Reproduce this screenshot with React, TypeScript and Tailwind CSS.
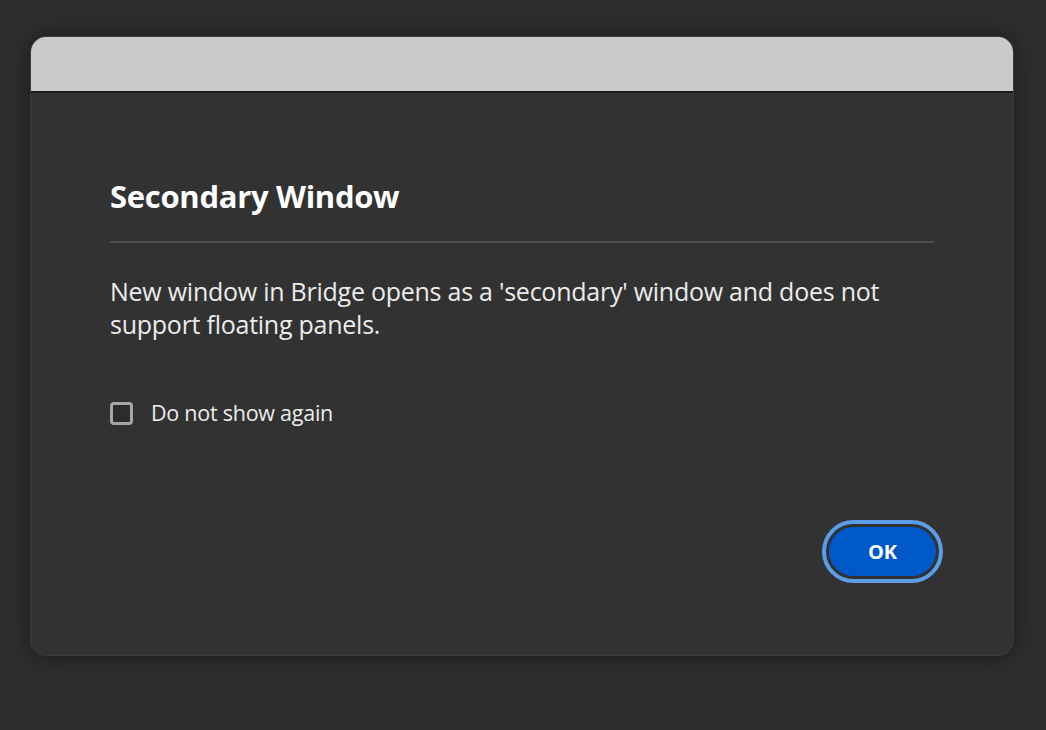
import React from "react";

export default function App() {
  return (
    <div
      className="w-[1046px] h-[730px] bg-[#2e2e2e] flex pl-[30px] pt-[36px]"
      style={{ fontFamily: '"Open Sans", "Noto Sans", "Liberation Sans", sans-serif' }}
    >
      <div className="w-[984px] h-[620px] rounded-[16px] overflow-hidden bg-[#323232] flex flex-col shadow-[0_0_24px_rgba(0,0,0,0.45)] border border-[#3c3c3c]">
        <div className="h-[56px] bg-[#cacaca] border-b-[2px] border-[#1a1a1a] shrink-0" />
        <div className="flex flex-col flex-1 px-[79px] pt-[84px]">
          <h1 className="text-[31px] leading-[38px] font-bold text-white tracking-[-0.3px]">
            Secondary Window
          </h1>
          <div className="h-[2px] bg-[#4f4f4f] mt-[26px]" />
          <p className="mt-[32px] text-[25px] leading-[33px] text-[#ececec] tracking-[-0.25px]">
            New window in Bridge opens as a 'secondary' window and does not
            <br />
            support floating panels.
          </p>
          <label className="mt-[56px] flex items-center gap-[18px] leading-[32px]">
            <span className="w-[23px] h-[23px] rounded-[4px] border-[3px] border-[#a6a6a6] bg-[#2c2c2c]" />
            <span className="text-[21.5px] text-[#ececec] tracking-[-0.25px]">Do not show again</span>
          </label>
          <div className="flex-1" />
          <div className="flex justify-end mb-[72px] mr-[-9px]">
            <div className="rounded-full border-[4px] border-[#5b9de6] p-[3px]">
              <button className="w-[107px] h-[49px] rounded-full bg-[#0059c9] text-white font-bold text-[20px] flex items-center justify-center">
                OK
              </button>
            </div>
          </div>
        </div>
      </div>
    </div>
  );
}
